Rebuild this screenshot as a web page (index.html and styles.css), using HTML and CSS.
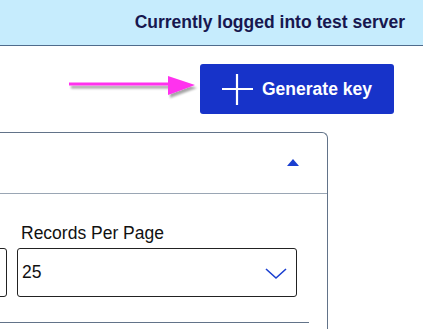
FILE: index.html
```html
<!DOCTYPE html>
<html>
<head>
<meta charset="utf-8">
<link rel="stylesheet" href="styles.css">
</head>
<body>
<header class="topbar">
  <span class="topbar-text">Currently logged into test server</span>
</header>
<div class="toolbar">
  <svg class="pointer-arrow" width="140" height="30" viewBox="0 0 140 30">
    <defs>
      <filter id="sh" x="-10%" y="-50%" width="130%" height="200%">
        <feDropShadow dx="2" dy="3" stdDeviation="1.2" flood-color="#000" flood-opacity="0.35"/>
      </filter>
    </defs>
    <g filter="url(#sh)">
      <line x1="4" y1="10" x2="108" y2="10" stroke="#ff33ee" stroke-width="3"/>
      <polygon points="103,2 130,11 103,21" fill="#ff33ee"/>
    </g>
  </svg>
  <button class="btn-generate">
    <svg class="plus" width="32" height="32" viewBox="0 0 32 32">
      <path d="M16 1V32M1 16H32" stroke="#fff" stroke-width="2.2" fill="none"/>
    </svg>
    <span>Generate key</span>
  </button>
</div>
<section class="card">
  <div class="card-head">
    <span class="caret"></span>
  </div>
  <div class="card-body">
    <div class="fields">
      <div class="field field-first">
        <label class="field-label">&nbsp;</label>
        <div class="box"></div>
      </div>
      <div class="field field-rpp">
        <label class="field-label">Records Per Page</label>
        <div class="box select">
          <span>25</span>
          <svg class="chev" width="22" height="12" viewBox="0 0 22 12">
            <path d="M1 1L11 10L21 1" stroke="#1a3fd0" stroke-width="1.6" fill="none"/>
          </svg>
        </div>
      </div>
    </div>
    <div class="divider"></div>
  </div>
</section>
</body>
</html>
```
FILE: styles.css
```css
* { box-sizing: border-box; }
html, body { margin: 0; padding: 0; overflow: hidden; }
body {
  font-family: "Liberation Sans", Arial, sans-serif;
  background: #fff;
  color: #111;
  width: 423px;
  height: 329px;
}
.topbar {
  height: 46px;
  background: #c6ecfd;
  border-bottom: 1px solid #4f6c8c;
  display: flex;
  align-items: center;
  justify-content: flex-end;
  padding-right: 18px;
  padding-bottom: 1px;
}
.topbar-text {
  font-weight: bold;
  font-size: 17.5px;
  color: #17174f;
}
.toolbar {
  position: relative;
  display: flex;
  justify-content: flex-end;
  padding: 18px 29px 0 0;
  height: 86px;
}
.pointer-arrow {
  position: absolute;
  left: 65px;
  top: 28px;
}
.btn-generate {
  width: 194px;
  height: 50px;
  background: #1733c9;
  border: none;
  border-radius: 3px;
  color: #fff;
  font-family: inherit;
  font-weight: bold;
  font-size: 17.5px;
  display: flex;
  align-items: center;
  padding: 0 0 0 21px;
  gap: 9px;
}
.plus { display: block; }
.card {
  margin-left: -40px;
  width: 368px;
  border: 1px solid #627389;
  border-radius: 6px 6px 0 0;
  border-bottom: none;
  height: 197px;
}
.card-head {
  height: 61px;
  border-bottom: 1px solid #9aa6b4;
  display: flex;
  align-items: center;
  justify-content: flex-end;
  padding-right: 28px;
}
.caret {
  width: 0;
  height: 0;
  border-left: 6px solid transparent;
  border-right: 6px solid transparent;
  border-bottom: 7px solid #1a3fd0;
  margin-top: -1px;
}
.card-body {
  padding: 29px 0 0 0;
}
.fields {
  display: flex;
  gap: 10px;
  padding-right: 30px;
}
.field { display: flex; flex-direction: column; }
.field-first { flex: 1; }
.field-rpp { width: 280px; }
.field-label {
  font-size: 17.5px;
  line-height: 20px;
  height: 20px;
  margin-bottom: 5px;
  color: #111;
  padding-left: 4px;
}
.box {
  height: 49px;
  border: 1px solid #222;
  border-radius: 3px;
}
.select {
  display: flex;
  align-items: center;
  justify-content: space-between;
  padding: 0 9px 0 4px;
  font-size: 17.5px;
  color: #111;
}
.chev { display: block; margin-top: 3px; }
.divider {
  margin-top: 25px;
  margin-right: 18px;
  border-top: 1px solid #627389;
}
```
